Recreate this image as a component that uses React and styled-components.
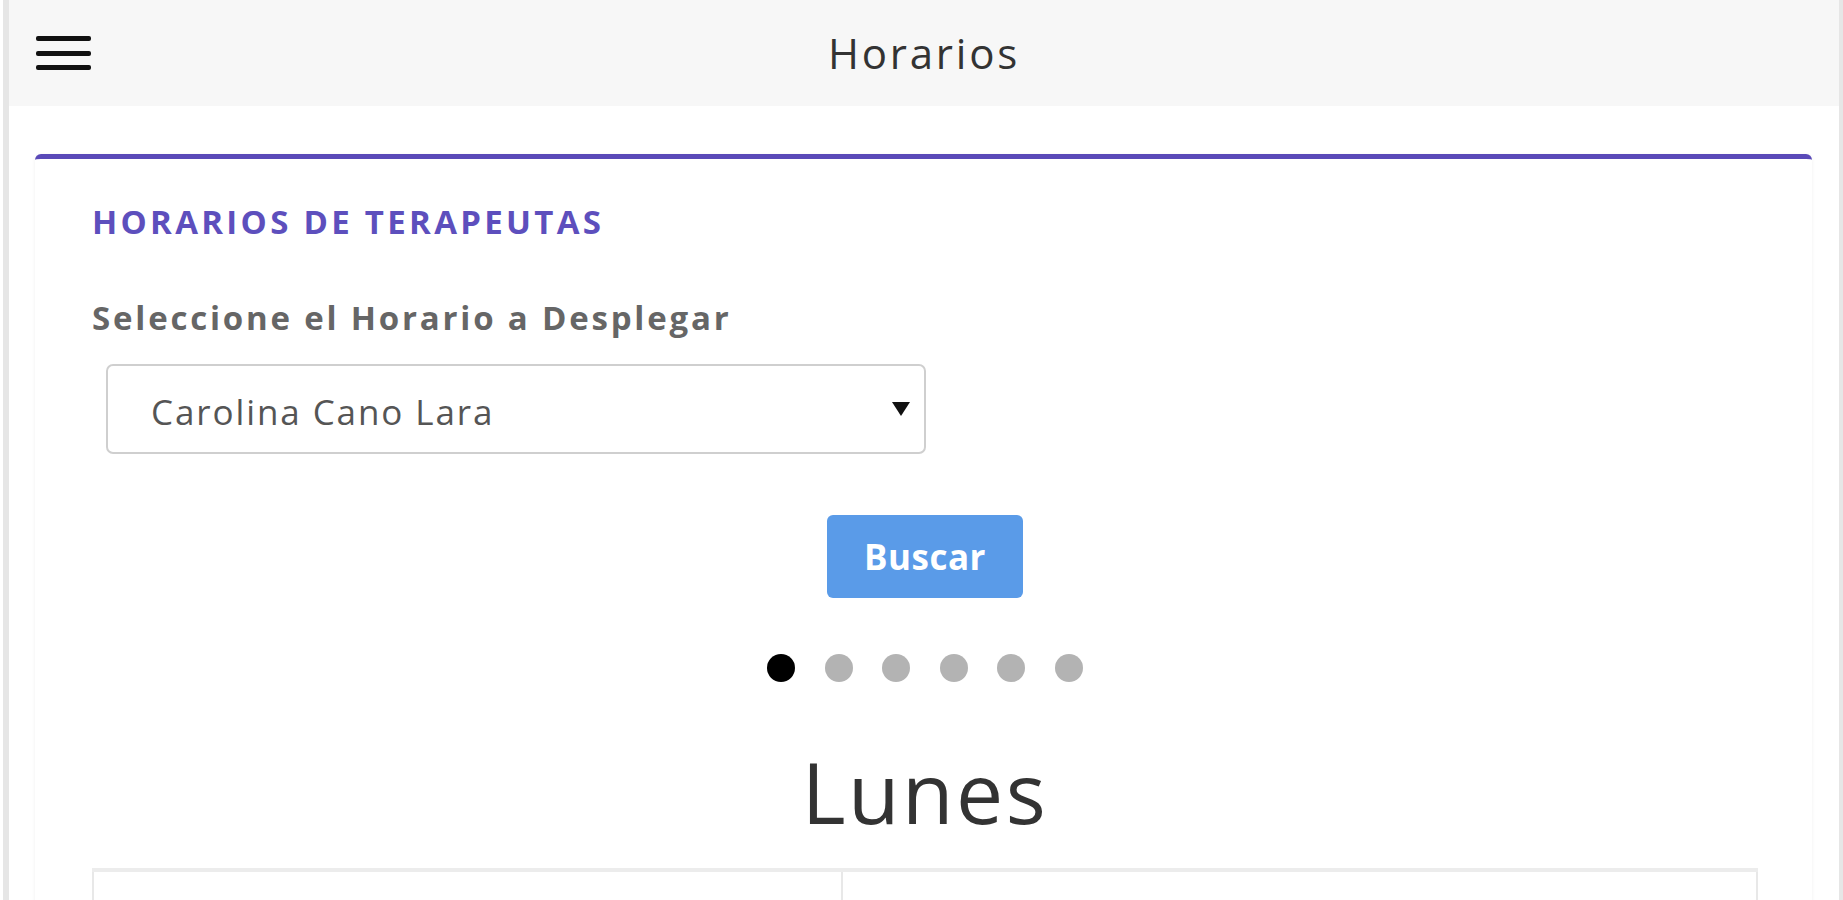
import styled, { createGlobalStyle } from "styled-components";

const GlobalStyle = createGlobalStyle`
  html, body {
    margin: 0;
    padding: 0;
    overflow: hidden;
    background: #ffffff;
    font-family: "Open Sans", "Liberation Sans", sans-serif;
  }
`;

const Page = styled.div`
  margin-left: 3px;
  min-height: 100vh;
  border-left: 6px solid #e6e6e6;
  border-right: 4px solid #e6e6e6;
  background: #ffffff;
`;

const TopBar = styled.header`
  position: relative;
  height: 106px;
  background: #f7f7f7;
  display: flex;
  align-items: center;
  justify-content: center;
`;

const MenuButton = styled.button`
  position: absolute;
  left: 27px;
  top: 36px;
  width: 55px;
  padding: 0;
  border: none;
  background: none;
  display: flex;
  flex-direction: column;
  gap: 9.5px;
  cursor: pointer;

  span {
    display: block;
    height: 5px;
    border-radius: 2px;
    background: #111;
  }
`;

const PageTitle = styled.h1`
  margin: 0;
  font-size: 42px;
  font-weight: 400;
  line-height: 1;
  letter-spacing: 2.8px;
  color: #333;
`;

const Card = styled.section`
  margin: 48px 27px 0 26px;
  border-top: 5px solid #5a4ab8;
  border-radius: 6px 6px 0 0;
  background: #fff;
  box-shadow: 0 1px 4px rgba(0, 0, 0, 0.06);
  padding: 46px 54px 0 57px;
  display: flex;
  flex-direction: column;
`;

const CardTitle = styled.h2`
  margin: 0;
  font-size: 33px;
  line-height: 1;
  font-weight: 700;
  letter-spacing: 3.3px;
  color: #5d4fbd;
`;

const FieldLabel = styled.label`
  margin-top: 63px;
  font-size: 33px;
  line-height: 1;
  font-weight: 700;
  letter-spacing: 2.8px;
  color: #666;
`;

const SelectBox = styled.div`
  position: relative;
  margin: 30px 0 0 14px;
  width: 820px;
`;

const Select = styled.select`
  appearance: none;
  width: 100%;
  height: 90px;
  box-sizing: border-box;
  border: 2px solid #cfcfcf;
  border-radius: 7px;
  background: #fff;
  padding: 4px 0 0 43px;
  font-family: "Open Sans", "Liberation Sans", sans-serif;
  font-size: 35px;
  letter-spacing: 1.9px;
  color: #555;
  outline: none;
`;

const Caret = styled.span`
  position: absolute;
  right: 16px;
  top: 38px;
  width: 0;
  height: 0;
  border-left: 9px solid transparent;
  border-right: 9px solid transparent;
  border-top: 14px solid #111;
  pointer-events: none;
`;

const Actions = styled.div`
  margin-top: 61px;
  display: flex;
  justify-content: center;
`;

const SearchButton = styled.button`
  width: 196px;
  height: 83px;
  border: none;
  border-radius: 6px;
  background: #5a9be8;
  color: #fff;
  font-family: "Open Sans", "Liberation Sans", sans-serif;
  font-size: 35px;
  font-weight: 700;
  letter-spacing: 0.5px;
  cursor: pointer;
`;

const Dots = styled.div`
  margin-top: 56px;
  display: flex;
  justify-content: center;
  gap: 29.5px;
`;

const Dot = styled.span`
  width: 28px;
  height: 28px;
  border-radius: 50%;
  background: ${(p) => (p.$active ? "#000" : "#b3b3b3")};
`;

const DayTitle = styled.h3`
  margin: 68px 0 0;
  text-align: center;
  font-size: 84px;
  line-height: 1;
  font-weight: 400;
  letter-spacing: 2.5px;
  color: #333;
`;

const Table = styled.table`
  margin-top: 34px;
  width: 100%;
  border-collapse: collapse;
  border-top: 4px solid #ececec;
  border-left: 2px solid #e8e8e8;
  border-right: 2px solid #e8e8e8;
`;

const Cell = styled.td`
  border: 2px solid #e8e8e8;
  border-top: none;
  padding: 25px 0 28px ${(p) => p.$pad || "24px"};
  font-size: 30px;
  font-weight: 700;
  color: #333;
  width: ${(p) => p.$w || "auto"};
`;

const days = ["Lunes", "Martes", "Miércoles", "Jueves", "Viernes", "Sábado"];

export default function App() {
  return (
    <>
      <GlobalStyle />
      <Page>
        <TopBar>
          <MenuButton aria-label="menu">
            <span />
            <span />
            <span />
          </MenuButton>
          <PageTitle>Horarios</PageTitle>
        </TopBar>

        <Card>
          <CardTitle>HORARIOS DE TERAPEUTAS</CardTitle>
          <FieldLabel htmlFor="terapeuta">Seleccione el Horario a Desplegar</FieldLabel>
          <SelectBox>
            <Select id="terapeuta" defaultValue="ccl">
              <option value="ccl">Carolina Cano Lara</option>
            </Select>
            <Caret />
          </SelectBox>

          <Actions>
            <SearchButton>Buscar</SearchButton>
          </Actions>

          <Dots>
            {days.map((d, i) => (
              <Dot key={d} $active={i === 0} />
            ))}
          </Dots>

          <DayTitle>Lunes</DayTitle>

          <Table>
            <tbody>
              <tr>
                <Cell $w="45%" />
                <Cell $pad="85px">Actividad</Cell>
              </tr>
            </tbody>
          </Table>
        </Card>
      </Page>
    </>
  );
}
